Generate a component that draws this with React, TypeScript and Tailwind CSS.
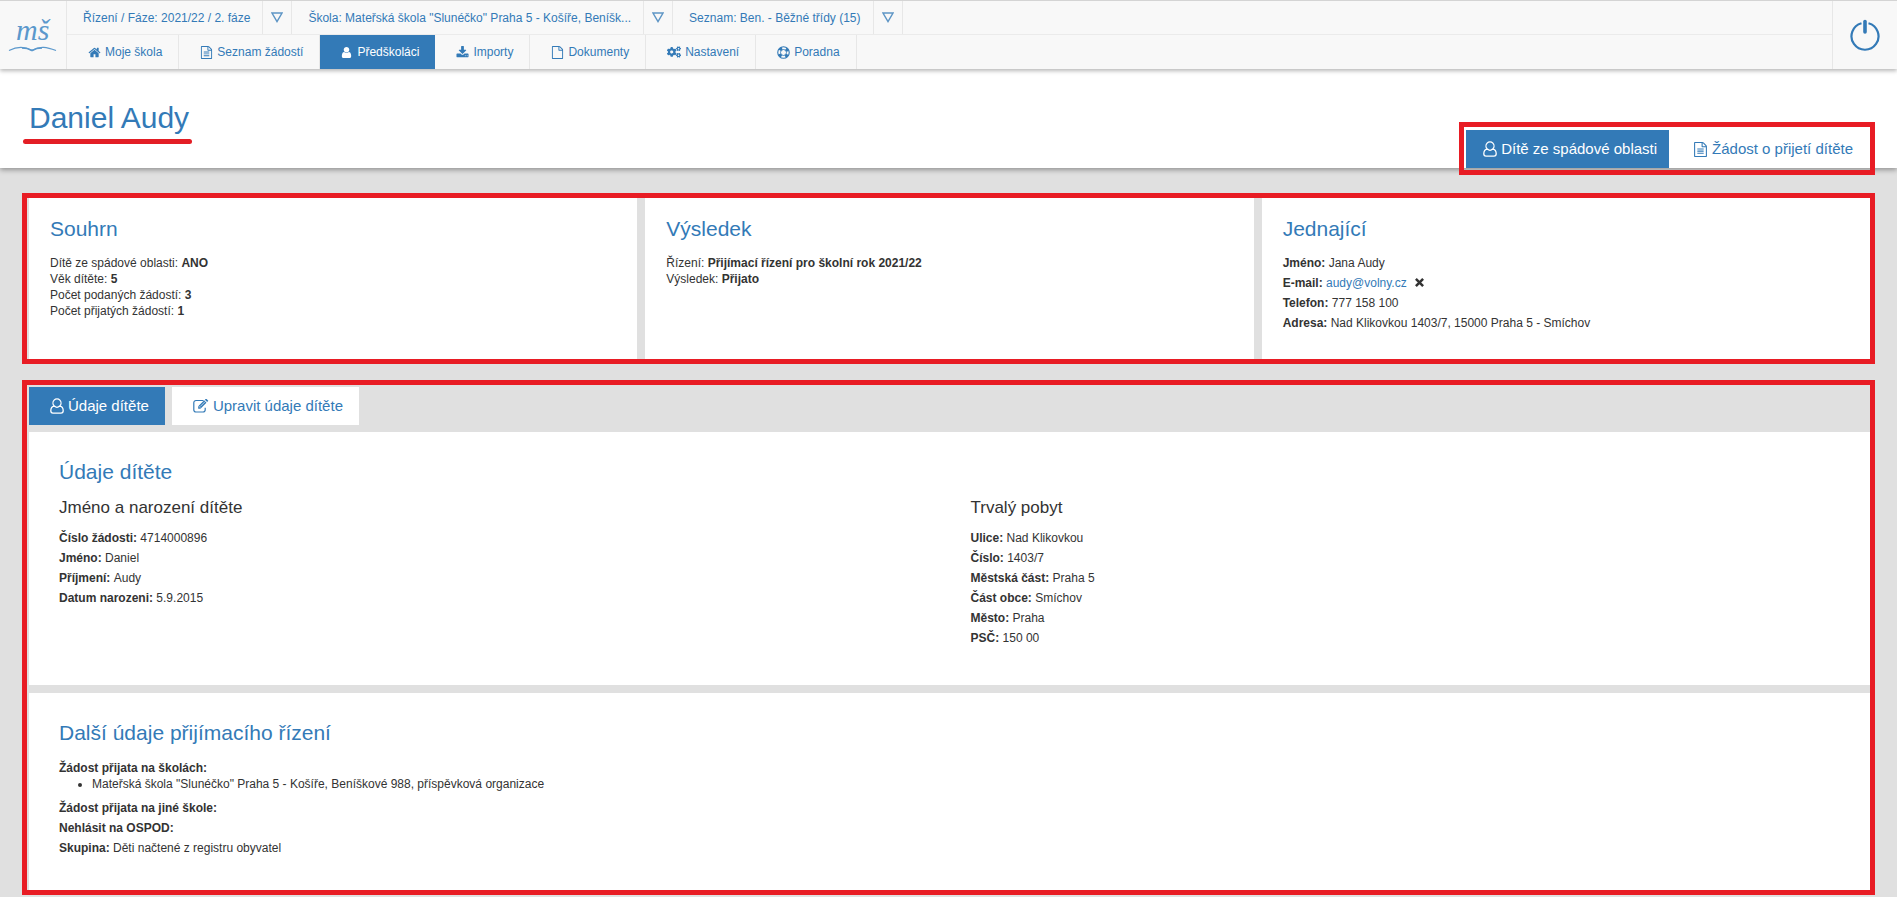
import type { ReactNode } from "react";
import { FaCogs } from "react-icons/fa";

const FILE_TEXT =
  "M1596 380q28 28 48 76t20 88v1152q0 40-28 68t-68 28h-1344q-40 0-68-28t-28-68v-1600q0-40 28-68t68-28h896q40 0 88 20t76 48zm-444-244v376h376q-10-29-22-41l-313-313q-12-12-41-22zm384 1528v-1024h-416q-40 0-68-28t-28-68v-416h-768v1536h1280zm-1024-864q0-14 9-23t23-9h704q14 0 23 9t9 23v64q0 14-9 23t-23 9h-704q-14 0-23-9t-9-23v-64zm736 224q14 0 23 9t9 23v64q0 14-9 23t-23 9h-704q-14 0-23-9t-9-23v-64q0-14 9-23t23-9h704zm0 256q14 0 23 9t9 23v64q0 14-9 23t-23 9h-704q-14 0-23-9t-9-23v-64q0-14 9-23t23-9h704z";
const FILE =
  "M1596 380q28 28 48 76t20 88v1152q0 40-28 68t-68 28h-1344q-40 0-68-28t-28-68v-1600q0-40 28-68t68-28h896q40 0 88 20t76 48zm-444-244v376h376q-10-29-22-41l-313-313q-12-12-41-22zm384 1528v-1024h-416q-40 0-68-28t-28-68v-416h-768v1536h1280z";
const HOME =
  "M1472 992v480q0 26-19 45t-45 19h-384v-384h-256v384h-384q-26 0-45-19t-19-45v-480q0-1 .5-3t.5-3l575-474 575 474q1 2 1 6zm223-69l-62 74q-8 9-21 11h-3q-13 0-21-7l-692-577-692 577q-12 8-24 7-13-2-21-11l-62-74q-8-10-7-23.5t11-21.5l719-599q32-26 76-26t76 26l244 204v-195q0-14 9-23t23-9h192q14 0 23 9t9 23v408l219 182q10 8 11 21.5t-7 23.5z";
const USER =
  "M1536 1399q0 109-62.5 187t-150.5 78h-854q-88 0-150.5-78t-62.5-187q0-85 8.5-160.5t31.5-152 58.5-131 94-89 134.5-34.5q131 128 313 128t313-128q76 0 134.5 34.5t94 89 58.5 131 31.5 152 8.5 160.5zm-256-887q0 159-112.5 271.5t-271.5 112.5-271.5-112.5-112.5-271.5 112.5-271.5 271.5-112.5 271.5 112.5 112.5 271.5z";
const DOWNLOAD =
  "M1344 1344q0-26-19-45t-45-19-45 19-19 45 19 45 45 19 45-19 19-45zm256 0q0-26-19-45t-45-19-45 19-19 45 19 45 45 19 45-19 19-45zm128-224v320q0 40-28 68t-68 28h-1472q-40 0-68-28t-28-68v-320q0-40 28-68t68-28h465l135 136q58 56 136 56t136-56l136-136h464q40 0 68 28t28 68zm-325-569q17 41-14 70l-448 448q-18 19-45 19t-45-19l-448-448q-31-29-14-70 17-39 59-39h256v-448q0-26 19-45t45-19h256q26 0 45 19t19 45v448h256q42 0 59 39z";

function Glyph({ d, className = "size-[13px]" }: { d: string; className?: string }) {
  return (
    <svg viewBox="0 0 1792 1792" fill="currentColor" aria-hidden="true" className={className}>
      <path d={d} />
    </svg>
  );
}

function UserOutline() {
  return (
    <svg viewBox="0 0 14 16" fill="none" stroke="currentColor" strokeWidth="1.3" aria-hidden="true" className="h-4 w-[14px]">
      <path d="M4.3 8.1A4 4.2 0 1 1 9.7 8.1C12 8.3 13.2 10.4 13.2 12.8C13.2 14.3 12.3 15.2 11 15.2H3C1.7 15.2 .8 14.3 .8 12.8C.8 10.4 2 8.3 4.3 8.1C5.8 9.5 8.2 9.5 9.7 8.1" />
    </svg>
  );
}

function EditIcon() {
  return (
    <svg viewBox="0 0 16 14" fill="none" stroke="currentColor" aria-hidden="true" className="h-[14px] w-4">
      <path d="M10.500 1.500H3A2.200 2.200 0 0 0 .8 3.700V10.800A2.200 2.200 0 0 0 3 13H10A2.200 2.200 0 0 0 12.200 10.800V8.800" strokeWidth="1.200" />
      <path d="M6.800 8L12.300 2.500" strokeWidth="3.200" />
      <path d="M13 1.800L14.200 .6" strokeWidth="3.200" />
      <path d="M5.200 9.700V6.800L8 9.700Z" fill="currentColor" stroke="none" />
      <path d="M7.200 7.500L12 2.700" stroke="#fff" strokeWidth=".7" />
    </svg>
  );
}

function LifeRing() {
  return (
    <svg viewBox="0 0 14 14" fill="none" stroke="currentColor" aria-hidden="true" className="size-[13px]">
      <circle cx="7" cy="7" r="6.2" strokeWidth="1.2" />
      <circle cx="7" cy="7" r="3.2" strokeWidth="1" />
      <circle cx="7" cy="7" r="4.7" strokeWidth="3" strokeDasharray="3.2 4.18" strokeDashoffset="-2.1" />
    </svg>
  );
}

function Cross() {
  return (
    <svg viewBox="0 0 10 10" stroke="currentColor" strokeWidth="2.8" aria-hidden="true" className="size-[9px]">
      <path d="M1 1L9 9M9 1L1 9" />
    </svg>
  );
}

const contexts = [
  "Řízení / Fáze: 2021/22 / 2. fáze",
  'Škola: Mateřská škola "Slunéčko" Praha 5 - Košíře, Beníšk...',
  "Seznam: Ben. - Běžné třídy (15)",
];

const menu: { label: string; icon: ReactNode; active?: boolean }[] = [
  { label: "Moje škola", icon: <Glyph d={HOME} /> },
  { label: "Seznam žádostí", icon: <Glyph d={FILE_TEXT} /> },
  { label: "Předškoláci", icon: <Glyph d={USER} />, active: true },
  { label: "Importy", icon: <Glyph d={DOWNLOAD} /> },
  { label: "Dokumenty", icon: <Glyph d={FILE} /> },
  { label: "Nastavení", icon: <FaCogs className="size-[14px]" aria-hidden="true" /> },
  { label: "Poradna", icon: <LifeRing /> },
];

function TopBar() {
  return (
    <header className="relative z-20 flex h-[69px] border-t border-[#d4d4d4] bg-[#f8f8f8] text-xs text-[#337ab7] shadow-[0_2px_4px_rgba(0,0,0,0.28)]">
      <a href="#" aria-label="Domů" className="flex w-[67px] shrink-0 justify-center border-r border-[#e7e7e7]">
        <svg viewBox="0 0 66 68" className="h-[68px] w-[66px]" aria-hidden="true">
          <text x="16" y="39" fontFamily="Liberation Serif, serif" fontStyle="italic" fontSize="30" fill="#5b98cc">
            mš
          </text>
          <path
            d="M9 49.500C17 45.500 25 45.500 32 49.500C40 44.500 47 46 56 49.500"
            fill="none"
            stroke="#5b98cc"
            strokeWidth="1.200"
          />
          <path d="M22 47Q28 47 32 49.500Q36 47 42 47" fill="none" stroke="#5b98cc" strokeWidth="1.500" />
        </svg>
      </a>
      <div className="flex min-w-0 flex-1 flex-col">
        <div className="flex h-[34px] border-b border-[#ebebeb]">
          {contexts.map((text) => (
            <div key={text} className="flex">
              <a href="#" className="flex items-center border-r border-[#e7e7e7] pr-3 pl-4 whitespace-nowrap">
                {text}
              </a>
              <button type="button" aria-label={text} className="flex w-[29px] items-center justify-center border-r border-[#e7e7e7]">
                <svg viewBox="0 0 12 11" className="h-[11px] w-3" fill="none" stroke="#5d95c5" strokeWidth="1.400" aria-hidden="true">
                  <path d="M1 1H11L6 9.500Z" />
                </svg>
              </button>
            </div>
          ))}
        </div>
        <nav className="flex h-[34px]">
          {menu.map(({ label, icon, active }) => (
            <a
              key={label}
              href="#"
              className={
                active
                  ? "flex items-center gap-1 bg-[#337ab7] pr-4 pl-5 whitespace-nowrap text-white"
                  : "flex items-center gap-1 border-r border-[#e7e7e7] pr-4 pl-[21px] whitespace-nowrap"
              }
            >
              {icon}
              {label}
            </a>
          ))}
        </nav>
      </div>
      <button type="button" aria-label="Odhlásit" className="flex w-[65px] shrink-0 items-center justify-center border-l border-[#e7e7e7]">
        <svg viewBox="0 0 32 34" className="h-[34px] w-8" fill="none" stroke="currentColor" aria-hidden="true">
          <path d="M12.500 5.200A13.500 13.500 0 1 0 19.500 5.200" strokeWidth="2.200" />
          <path d="M16 3.500V14" strokeWidth="3.600" strokeLinecap="round" />
        </svg>
      </button>
    </header>
  );
}

function Field({ label, children }: { label: string; children?: ReactNode }) {
  return (
    <div>
      <dt className="inline font-bold">{label}:</dt> <dd className="inline">{children}</dd>
    </div>
  );
}

function Card({ title, children }: { title: string; children: ReactNode }) {
  return (
    <section className="min-h-[161px] bg-white px-[21px] pt-[19px]">
      <h2 className="mb-[14px] text-[21px] leading-6 text-[#337ab7]">{title}</h2>
      {children}
    </section>
  );
}

export default function App() {
  return (
    <div className="min-h-screen bg-[#e0e0e0] font-['Liberation_Sans',Arial,sans-serif] text-xs leading-4 text-[#333]">
      <TopBar />

      <div className="relative z-10 flex h-[99px] items-end justify-between bg-white pr-[22px] pl-[23px] shadow-[0_2px_5px_rgba(0,0,0,0.35)]">
        <div className="mb-6">
          <h1 className="mb-[2px] pr-[3px] pl-[6px] text-[30px] leading-[38px] text-[#337ab7]">Daniel Audy</h1>
          <div className="h-[5px] rounded-full bg-[#e31e25]" />
        </div>
        <nav className="-mb-[7px] flex gap-2 border-[5px] border-[#e81c24] pt-[3px] pb-[2px] pl-[2px] text-[15px] text-[#337ab7]">
          <a href="#" className="flex h-[38px] items-center gap-1 bg-[#337ab7] pr-3 pl-[17px] text-white">
            <UserOutline />
            Dítě ze spádové oblasti
          </a>
          <a href="#" className="flex h-[38px] items-center gap-1 pr-[17px] pl-4">
            <Glyph d={FILE_TEXT} className="size-[15px]" />
            Žádost o přijetí dítěte
          </a>
        </nav>
      </div>

      <main className="px-[22px] pt-[25px]">
        <div className="grid grid-cols-3 gap-2 border-[5px] border-[#e81c24] pl-[2px]">
          <Card title="Souhrn">
            <p>Dítě ze spádové oblasti: <b>ANO</b></p>
            <p>Věk dítěte: <b>5</b></p>
            <p>Počet podaných žádostí: <b>3</b></p>
            <p>Počet přijatých žádostí: <b>1</b></p>
          </Card>
          <Card title="Výsledek">
            <p>Řízení: <b>Přijímací řízení pro školní rok 2021/22</b></p>
            <p>Výsledek: <b>Přijato</b></p>
          </Card>
          <Card title="Jednající">
            <dl className="flex flex-col gap-1">
              <Field label="Jméno">Jana Audy</Field>
              <Field label="E-mail">
                <a href="mailto:audy@volny.cz" className="text-[#337ab7]">audy@volny.cz</a>
                <button type="button" aria-label="Odebrat e-mail" className="ml-2">
                  <Cross />
                </button>
              </Field>
              <Field label="Telefon">777 158 100</Field>
              <Field label="Adresa">Nad Klikovkou 1403/7, 15000 Praha 5 - Smíchov</Field>
            </dl>
          </Card>
        </div>

        <div className="mt-4 border-[5px] border-[#e81c24] pt-[2px] pl-[2px]">
          <nav className="flex gap-[7px] pb-[7px] text-[15px] text-[#337ab7]">
            <a href="#" className="flex h-[38px] items-center gap-1 bg-[#337ab7] pr-4 pl-[21px] text-white">
              <UserOutline />
              Údaje dítěte
            </a>
            <a href="#" className="flex h-[38px] items-center gap-1 bg-white pr-4 pl-[21px]">
              <EditIcon />
              Upravit údaje dítěte
            </a>
          </nav>

          <section className="min-h-[253px] bg-white pt-7 pl-[30px]">
            <h2 className="text-[21px] leading-6 text-[#337ab7]">Údaje dítěte</h2>
            <div className="mt-3 grid grid-cols-2 gap-3">
              <div>
                <h3 className="mb-[10px] text-[17px] leading-6">Jméno a narození dítěte</h3>
                <dl className="flex flex-col gap-1">
                  <Field label="Číslo žádosti">4714000896</Field>
                  <Field label="Jméno">Daniel</Field>
                  <Field label="Příjmení">Audy</Field>
                  <Field label="Datum narozeni">5.9.2015</Field>
                </dl>
              </div>
              <div>
                <h3 className="mb-[10px] text-[17px] leading-6">Trvalý pobyt</h3>
                <dl className="flex flex-col gap-1">
                  <Field label="Ulice">Nad Klikovkou</Field>
                  <Field label="Číslo">1403/7</Field>
                  <Field label="Městská část">Praha 5</Field>
                  <Field label="Část obce">Smíchov</Field>
                  <Field label="Město">Praha</Field>
                  <Field label="PSČ">150 00</Field>
                </dl>
              </div>
            </div>
          </section>

          <section className="mt-2 min-h-[197px] bg-white pt-7 pl-[30px]">
            <h2 className="mb-[15px] text-[21px] leading-6 text-[#337ab7]">Další údaje přijímacího řízení</h2>
            <p className="font-bold">Žádost přijata na školách:</p>
            <ul className="mb-2 list-disc pl-[33px]">
              <li>Mateřská škola "Slunéčko" Praha 5 - Košíře, Beníškové 988, příspěvková organizace</li>
            </ul>
            <dl className="flex flex-col gap-1">
              <Field label="Žádost přijata na jiné škole" />
              <Field label="Nehlásit na OSPOD" />
              <Field label="Skupina">Děti načtené z registru obyvatel</Field>
            </dl>
          </section>
        </div>
      </main>
    </div>
  );
}
